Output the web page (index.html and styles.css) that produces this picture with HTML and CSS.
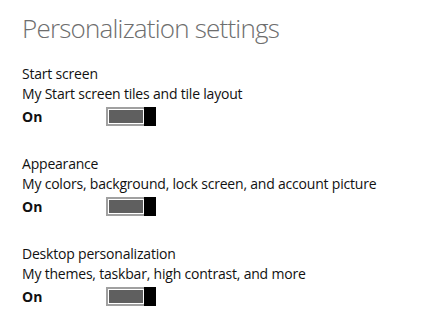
FILE: index.html
```html
<!DOCTYPE html>
<html>
<head>
<meta charset="utf-8">
<link rel="stylesheet" href="styles.css">
</head>
<body>
<div class="page">
  <h1 class="title">Personalization settings</h1>
  <section class="setting">
    <div class="name">Start screen</div>
    <div class="desc">My Start screen tiles and tile layout</div>
    <div class="state">
      <span class="label">On</span>
      <span class="toggle"><span class="track"></span><span class="thumb"></span></span>
    </div>
  </section>
  <section class="setting">
    <div class="name">Appearance</div>
    <div class="desc">My colors, background, lock screen, and account picture</div>
    <div class="state">
      <span class="label">On</span>
      <span class="toggle"><span class="track"></span><span class="thumb"></span></span>
    </div>
  </section>
  <section class="setting">
    <div class="name">Desktop personalization</div>
    <div class="desc">My themes, taskbar, high contrast, and more</div>
    <div class="state">
      <span class="label">On</span>
      <span class="toggle"><span class="track"></span><span class="thumb"></span></span>
    </div>
  </section>
</div>
</body>
</html>
```

FILE: styles.css
```css
html, body {
  margin: 0;
  padding: 0;
  background: #ffffff;
}
.page {
  padding: 10px 0 0 22px;
  font-family: "Open Sans", "DejaVu Sans", sans-serif;
  color: #111111;
}
.title {
  margin: 0 0 18px 0;
  font-size: 26px;
  font-weight: 300;
  letter-spacing: -0.8px;
  color: #6e6e6e;
  line-height: 36px;
}
.setting {
  margin-bottom: 28px;
}
.name, .desc {
  font-size: 14px;
  letter-spacing: -0.2px;
  line-height: 20px;
}
.state {
  display: flex;
  align-items: center;
  margin-top: 3px;
  height: 19px;
}
.label {
  width: 84px;
  font-size: 14px;
  font-weight: 700;
}
.toggle {
  display: flex;
  width: 50px;
  height: 19px;
}
.track {
  flex: 1;
  border: 2px solid #a0a0a0;
  border-right: none;
  background: #5f5f5f;
  box-shadow: inset 0 0 0 1px #ffffff;
}
.thumb {
  width: 12px;
  background: #000000;
}
```
